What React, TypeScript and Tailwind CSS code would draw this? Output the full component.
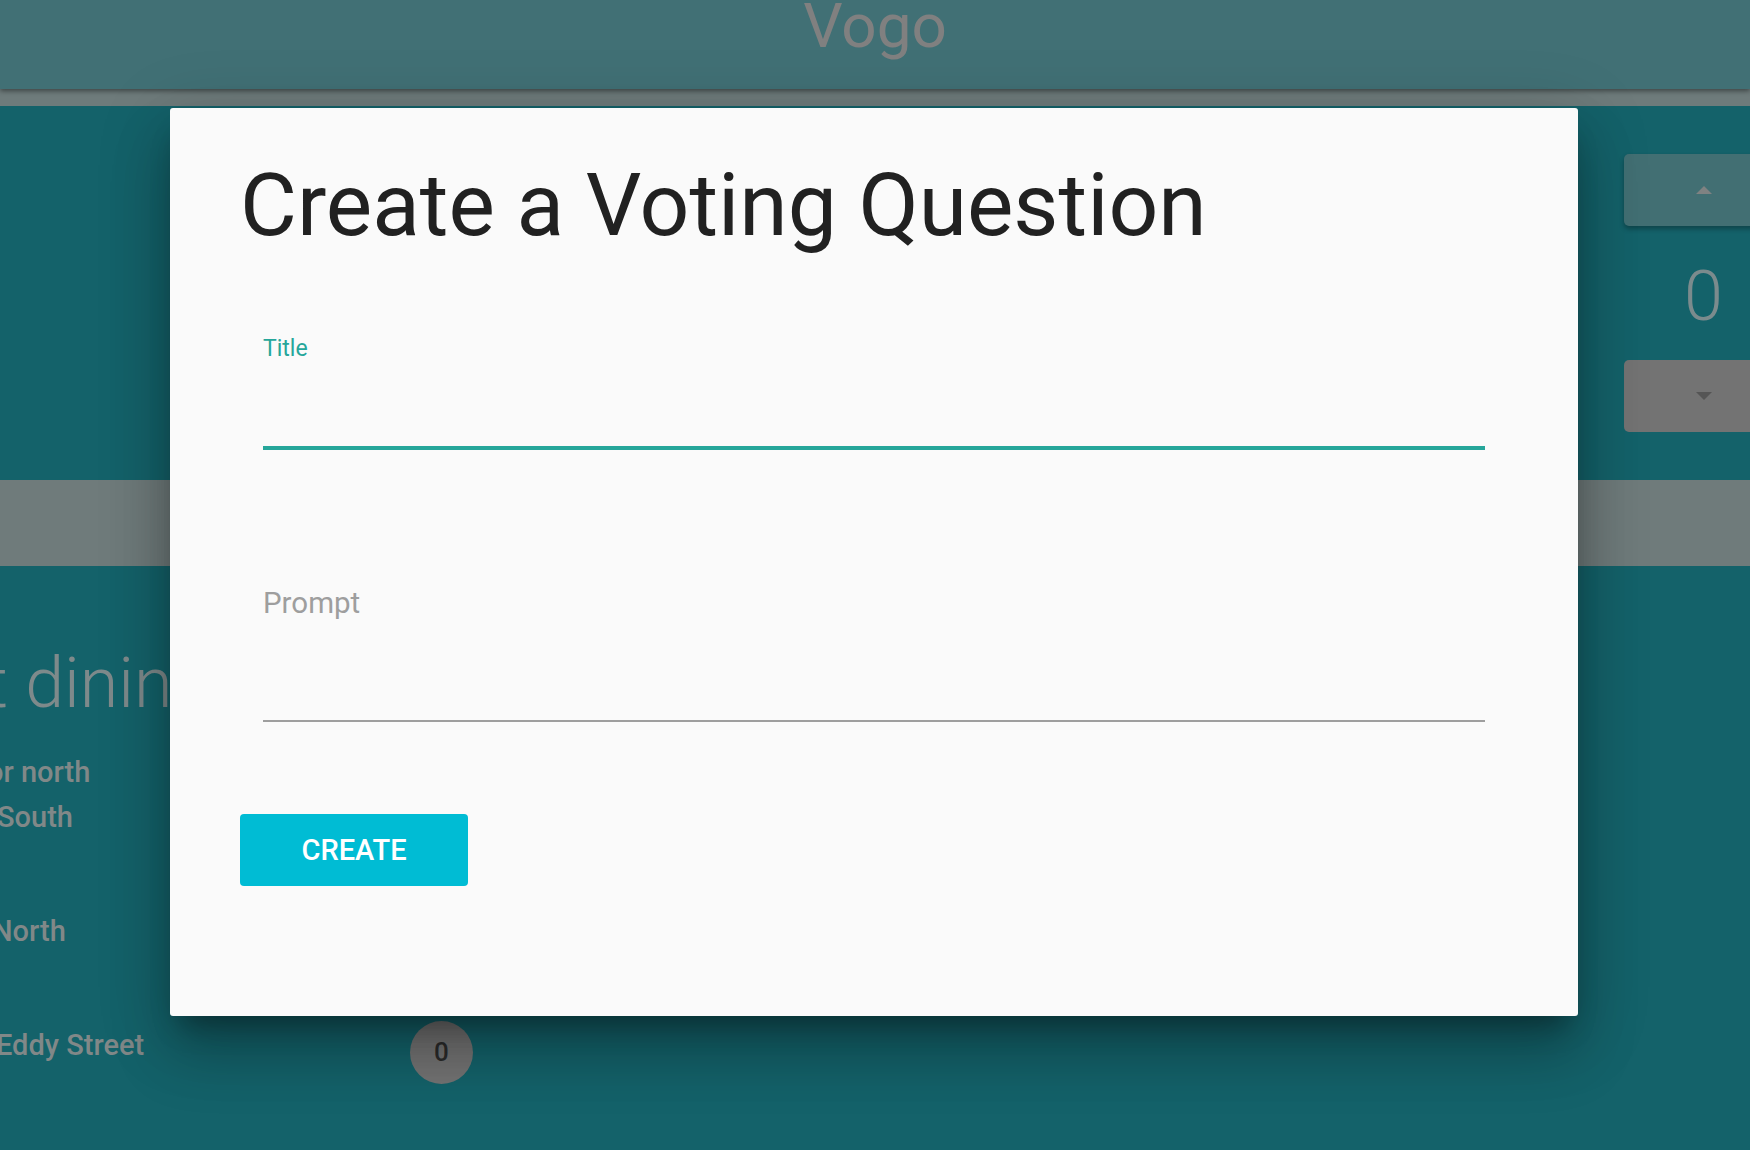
import React from "react"

function Triangle({ up, color }: { up?: boolean; color: string }) {
    return (
        <svg width="16" height="8" viewBox="0 0 16 8">
            <path d={up ? "M0 8 L8 0 L16 8 Z" : "M0 0 L8 8 L16 0 Z"} fill={color} />
        </svg>
    )
}

function Counter() {
    return (
        <div className="h-[47px]">
            <div className="w-[63px] h-[63px] rounded-full bg-[#737373] flex items-center justify-center text-[26px] font-medium text-[#2b2b2b] shrink-0">
                0
            </div>
        </div>
    )
}

export default function App() {
    const items = [
        { lines: [{ text: "or north", ml: "ml-[-13px]" }, { text: "South", ml: "ml-[-3px]" }] },
        { lines: [{ text: "North", ml: "ml-[-8px]" }] },
        { lines: [{ text: "Eddy Street", ml: "ml-[-4px]" }] },
    ]

    return (
        <div className="relative w-[1750px] h-[1150px] overflow-hidden bg-[#14626a] font-[Roboto,sans-serif]">
            {/* app bar */}
            <header className="relative z-10 h-[89px] bg-[#417075] flex justify-center shadow-[0_2px_5px_rgba(0,0,0,0.45)]">
                <div className="mt-[-5px] text-[62px] leading-none text-[#808080]">Vogo</div>
            </header>
            <div className="h-[17px] bg-[#6e7b7b]" />

            {/* question area */}
            <section className="h-[374px] flex justify-end">
                <div className="w-[160px] mr-[-34px] pt-[48px] flex flex-col items-start">
                    <button className="w-[160px] h-[72px] rounded-[5px] bg-[#426f73] shadow-[0_3px_5px_rgba(0,0,0,0.3)] flex items-center pl-[72px]">
                        <Triangle up color="#7f8282" />
                    </button>
                    <div className="mt-[35px] w-[160px] pl-[60px] h-[70px] text-[70px] font-light leading-none text-[#7b8b8d]">0</div>
                    <button className="mt-[29px] w-[160px] h-[72px] rounded-[5px] bg-[#737373] flex items-center pl-[72px]">
                        <Triangle color="#555555" />
                    </button>
                </div>
            </section>
            <div className="h-[86px] bg-[#6f7b7b]" />

            {/* options */}
            <section className="pt-[82px]">
                <h2 className="ml-[-129px] text-[70px] font-light leading-none text-[#7e8a8b] whitespace-nowrap">Best dining hall?</h2>
                <div className="mt-[30px] flex flex-col gap-[67px]">
                    {items.map((item, i) => (
                        <div key={i} className="flex items-start">
                            <div className="w-[410px] mt-[2px]">
                                {item.lines.map((line, j) => (
                                    <div key={j} className={`${line.ml} text-[29px] font-medium leading-[45px] text-[#818888] whitespace-nowrap`}>
                                        {line.text}
                                    </div>
                                ))}
                            </div>
                            <Counter />
                        </div>
                    ))}
                </div>
            </section>

            {/* dialog */}
            <div className="absolute inset-0 z-20 flex justify-start pl-[170px] pt-[108px]">
                <div className="w-[1408px] h-[908px] bg-[#fafafa] rounded-[3px] pl-[70px] pr-[93px] pt-[54px] flex flex-col items-start shadow-[0_19px_26px_-12px_rgba(0,0,0,0.35),0_38px_60px_2px_rgba(0,0,0,0.2),0_14px_70px_8px_rgba(0,0,0,0.14)]">
                    <h1 className="text-[87.5px] leading-none text-[#212121] whitespace-nowrap">Create a Voting Question</h1>

                    <label className="ml-[23px] mt-[87px] self-stretch block">
                        <div className="text-[23px] leading-none text-[#26a69a]">Title</div>
                        <input className="block w-full h-[90px] bg-transparent outline-none border-b-4 border-[#26a69a] text-[28px]" />
                    </label>

                    <label className="ml-[23px] mt-[139px] self-stretch block">
                        <div className="text-[29.5px] leading-none text-[#9e9e9e]">Prompt</div>
                        <input className="block w-full h-[104px] bg-transparent outline-none border-b-2 border-[#9e9e9e] text-[28px]" />
                    </label>

                    <button className="mt-[92px] w-[228px] h-[72px] rounded-[4px] bg-[#00bcd4] text-white text-[29px] font-medium leading-none">
                        CREATE
                    </button>
                </div>
            </div>
        </div>
    )
}
